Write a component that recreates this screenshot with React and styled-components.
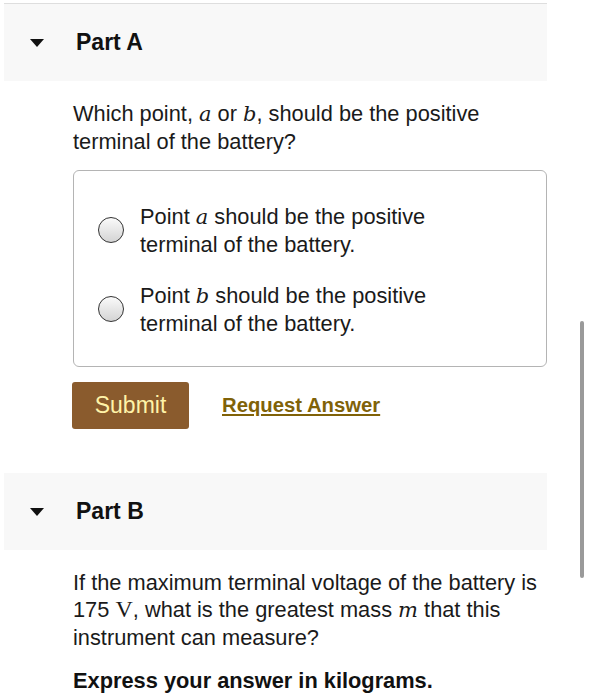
import React from 'react';
import styled, { createGlobalStyle } from 'styled-components';

const GlobalStyle = createGlobalStyle`
  html, body {
    margin: 0;
    padding: 0;
    background: #fff;
  }
  body {
    font-family: "Liberation Sans", Arial, sans-serif;
    color: #1a1a1a;
  }
`;

const Page = styled.div`
  width: 543px;
  margin-left: 4px;
  padding-top: 3px;
`;

const TopRule = styled.div`
  height: 1px;
  background: #dedede;
`;

const PartHeader = styled.div`
  height: 77px;
  background: #f8f8f8;
  display: flex;
  align-items: center;
  padding-left: 26px;
`;

const Caret = styled.span`
  width: 0;
  height: 0;
  border-left: 7px solid transparent;
  border-right: 7px solid transparent;
  border-top: 8px solid #111;
  margin-top: 1px;
`;

const PartTitle = styled.h2`
  margin: 0 0 0 32px;
  font-size: 23px;
  font-weight: 700;
  color: #111;
`;

const PartBody = styled.div`
  padding: 19px 0 0 69px;
`;

const Prompt = styled.p`
  margin: 0;
  font-size: 21.8px;
  line-height: 27px;
  color: #1a1a1a;
`;

const Var = styled.span`
  font-family: "DejaVu Serif", "Liberation Serif", serif;
  font-style: italic;
  font-size: 21px;
`;

const Unit = styled.span`
  font-family: "Liberation Serif", serif;
  font-size: 24px;
`;

const Choices = styled.div`
  margin-top: 15px;
  border: 1px solid #b4b4b4;
  border-radius: 6px;
  padding: 32px 0 28px 24px;
  display: flex;
  flex-direction: column;
  gap: 23px;
`;

const Choice = styled.label`
  display: flex;
  align-items: center;
  gap: 16px;
  font-size: 21.8px;
  line-height: 28px;
  cursor: pointer;
`;

const Radio = styled.span`
  flex: 0 0 auto;
  width: 24px;
  height: 24px;
  border-radius: 50%;
  border: 1.5px solid #333;
  background: linear-gradient(#fafafa, #d4d4d4);
  margin-top: -3px;
`;

const Actions = styled.div`
  display: flex;
  align-items: center;
  gap: 33px;
  margin: 15px 0 0 -1px;
`;

const SubmitButton = styled.button`
  width: 117px;
  height: 47px;
  border: none;
  border-radius: 3px;
  background: #8a5b2d;
  color: #fff3a8;
  font-family: "Liberation Sans", Arial, sans-serif;
  font-size: 23px;
  cursor: pointer;
`;

const RequestLink = styled.a`
  font-size: 20.3px;
  font-weight: 700;
  color: #806208;
  text-decoration: underline;
  text-underline-offset: 2px;
  cursor: pointer;
`;

const Gap = styled.div`
  height: ${p => p.h}px;
`;

const Instruction = styled.p`
  margin: 16px 0 0;
  font-size: 21.8px;
  font-weight: 700;
  line-height: 27px;
  color: #111;
`;

const ScrollThumb = styled.div`
  position: fixed;
  left: 580px;
  top: 321px;
  width: 4px;
  height: 257px;
  border-radius: 2px;
  background: #9a9a9a;
`;

function Part({ title, children }) {
  return (
    <>
      <PartHeader>
        <Caret />
        <PartTitle>{title}</PartTitle>
      </PartHeader>
      <PartBody>{children}</PartBody>
    </>
  );
}

export default function App() {
  return (
    <>
      <GlobalStyle />
      <Page>
        <TopRule />
        <Part title="Part A">
          <Prompt>
            Which point, <Var>a</Var> or <Var>b</Var>, should be the positive
            <br />
            terminal of the battery?
          </Prompt>
          <Choices>
            <Choice>
              <Radio />
              <span>
                Point <Var>a</Var> should be the positive
                <br />
                terminal of the battery.
              </span>
            </Choice>
            <Choice>
              <Radio />
              <span>
                Point <Var>b</Var> should be the positive
                <br />
                terminal of the battery.
              </span>
            </Choice>
          </Choices>
          <Actions>
            <SubmitButton>Submit</SubmitButton>
            <RequestLink>Request Answer</RequestLink>
          </Actions>
        </Part>
        <Gap h={44} />
        <Part title="Part B">
          <Prompt>
            If the maximum terminal voltage of the battery is
            <br />
            175 <Unit>V</Unit>, what is the greatest mass <Var>m</Var> that this
            <br />
            instrument can measure?
          </Prompt>
          <Instruction>Express your answer in kilograms.</Instruction>
        </Part>
      </Page>
      <ScrollThumb />
    </>
  );
}
